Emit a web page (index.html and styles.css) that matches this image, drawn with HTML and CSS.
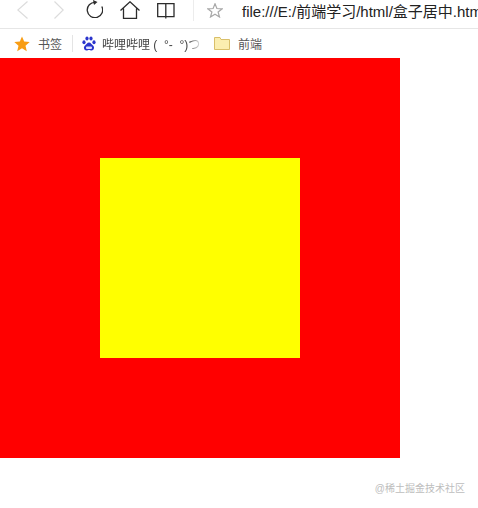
FILE: index.html
```html
<!DOCTYPE html>
<html lang="zh">
<head>
<meta charset="utf-8">
<title>盒子居中</title>
<link rel="stylesheet" href="styles.css">
</head>
<body>
<header class="toolbar">
  <svg class="ic back" width="11" height="18" viewBox="0 0 11 18"><path d="M10.500 0.500 L0.800 9 L10.500 17.500" /></svg>
  <svg class="ic fwd" width="10" height="18" viewBox="0 0 10 18"><path d="M0.500 0.500 L9.200 9 L0.500 17.500" /></svg>
  <svg class="ic reload" width="17" height="18" viewBox="0 0 17 18"><path class="dark" d="M9.300 2.300 A7.700 7.700 0 1 0 15.800 6.500" /><path class="fill" d="M7 0 L11.500 2 L8 5 Z" /></svg>
  <svg class="ic home" width="20" height="18" viewBox="0 0 20 18"><path class="dark" d="M0.500 9.500 L10 0.800 L19.500 9.500 M3.500 7.500 V17.300 H16.500 V7.500" /></svg>
  <svg class="ic book" width="18" height="16" viewBox="0 0 18 16"><path class="dark" d="M0.700 0.700 H17 V13.700 H0.700 Z M8.800 0.700 V15.500" /></svg>
  <span class="sep"></span>
  <svg class="ic star" width="16" height="15" viewBox="0 0 16 15"><path class="grey" d="M8 0.800 L9.900 5.500 L15.200 5.800 L11.100 9 L12.500 14 L8 11.300 L3.500 14 L4.900 9 L0.800 5.800 L6.100 5.500 Z" /></svg>
  <span class="url">file:///E:/前端学习/html/盒子居中.html</span>
</header>
<nav class="bookmarks">
  <svg class="mark-star" width="16" height="16" viewBox="0 0 16 16"><path d="M8 0.500 L10.200 5.600 L15.700 6.100 L11.500 9.700 L12.800 15.200 L8 12.300 L3.200 15.200 L4.500 9.700 L0.300 6.100 L5.800 5.600 Z" /></svg>
  <span class="bm-label first">书签</span>
  <span class="bm-sep"></span>
  <svg class="paw" width="14" height="15" viewBox="0 0 14 15"><ellipse cx="2" cy="6.300" rx="1.600" ry="2"/><ellipse cx="5" cy="2.500" rx="1.600" ry="2.100"/><ellipse cx="9" cy="2.500" rx="1.600" ry="2.100"/><ellipse cx="12" cy="6.300" rx="1.600" ry="2"/><path d="M7 6.500 C9 6.500 9.500 8.500 11 9.500 C13 11 12 14.500 9.500 14.500 C8.500 14.500 8 14 7 14 C6 14 5.500 14.500 4.500 14.500 C2 14.500 1 11 3 9.500 C4.500 8.500 5 6.500 7 6.500 Z"/><rect class="paw-mark" x="4" y="10.500" width="6" height="2.500" rx="1"/></svg>
  <span class="bm-label site">哔哩哔哩 (  °-  °)つ</span>
  <svg class="folder" width="16" height="13" viewBox="0 0 16 13"><path d="M0.500 12.500 V0.500 H6 L7 2.500 H15.500 V12.500 Z" /></svg>
  <span class="bm-label last">前端</span>
</nav>
<main class="page">
  <div class="outer"><div class="inner"></div></div>
  <div class="watermark">@稀土掘金技术社区</div>
</main>
</body>
</html>
```

FILE: styles.css
```css
* { box-sizing: border-box; }
html, body { margin: 0; padding: 0; background: #fff; overflow: hidden; }
body { width: 478px; height: 508px; font-family: "Liberation Sans", "Noto Sans CJK SC", sans-serif; }

.toolbar {
  height: 29px;
  display: flex;
  align-items: flex-start;
  padding: 1px 0 0 17px;
  border-bottom: 1px solid #e6e6e6;
  white-space: nowrap;
  overflow: hidden;
}
.ic { flex: none; fill: none; stroke: #dcdcdc; stroke-width: 1.2; }
.ic .dark { stroke: #2b2b2b; stroke-width: 1.300; fill: none; }
.ic .fill { fill: #2b2b2b; stroke: none; }
.ic .grey { stroke: #a8a8a8; stroke-width: 1.200; }
.fwd { margin-left: 26px; }
.reload { margin-left: 22px; margin-top: -1px; }
.home { margin-left: 17px; }
.book { margin-left: 17px; margin-top: 2px; }
.sep { flex: none; width: 1px; height: 21px; background: #ececec; margin: -1px 0 0 18px; }
.star { margin: 2px 0 0 13px; }
.url { flex: none; margin: 1px 0 0 19px; font-size: 15px; line-height: 20px; color: #222; }

.bookmarks {
  height: 29px;
  display: flex;
  align-items: center;
  padding-left: 14px;
  font-size: 12px;
  color: #555;
  white-space: nowrap;
  overflow: hidden;
}
.mark-star { flex: none; fill: #f89d14; }
.bm-label { flex: none; }
.first { margin-left: 8px; }
.bm-sep { flex: none; width: 1px; height: 17px; background: #e4e4e4; margin-left: 10px; }
.paw { flex: none; fill: #2b35cc; margin-left: 9px; }
.paw-mark { fill: #dfe2ff; }
.site {
  margin-left: 6px;
  width: 98px;
  overflow: hidden;
  white-space: pre;
  color: #444;
  -webkit-mask-image: linear-gradient(to right, #000 88%, rgba(0, 0, 0, 0.15) 100%);
  mask-image: linear-gradient(to right, #000 88%, rgba(0, 0, 0, 0.15) 100%);
}
.folder { flex: none; fill: #fbeeb0; stroke: #d9bf6a; margin-left: 14px; }
.last { margin-left: 8px; }

.page { position: relative; height: 450px; }
.outer {
  width: 400px;
  height: 400px;
  padding: 100px;
  background: #f00;
}
.inner { width: 200px; height: 200px; background: #ff0; }
.watermark {
  margin: 24px 13px 0 0;
  text-align: right;
  font-size: 10px;
  line-height: 14px;
  color: #bdbdbd;
}
```
